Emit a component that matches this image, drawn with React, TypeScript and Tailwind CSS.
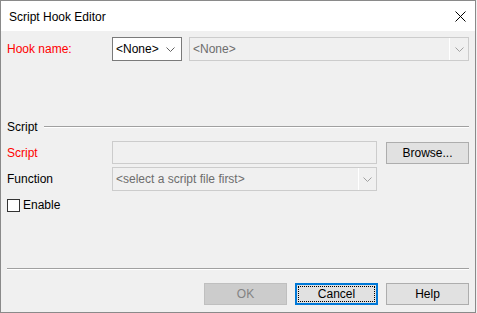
import React from "react";

const font = { fontFamily: '"Liberation Sans", Arial, sans-serif' };

function Chevron({ color = "#606060" }: { color?: string }) {
  return (
    <svg width="9" height="5" viewBox="0 0 9 5" className="shrink-0">
      <polyline points="0.5,0.5 4.5,4.5 8.5,0.5" fill="none" stroke={color} strokeWidth="1" />
    </svg>
  );
}

function Button({ label, kind }: { label: string; kind?: "disabled" | "focus" }) {
  if (kind === "disabled") {
    return (
      <div className="flex h-[22px] w-[83px] items-center justify-center border border-[#bfbfbf] bg-[#cccccc] text-[#838383]">
        {label}
      </div>
    );
  }
  if (kind === "focus") {
    return (
      <div className="flex h-[22px] w-[83px] border-2 border-[#0078d7] bg-[#e1e1e1] p-px">
        <div className="flex flex-1 items-center justify-center border border-dotted border-black">
          {label}
        </div>
      </div>
    );
  }
  return (
    <div className="flex h-[22px] w-[83px] items-center justify-center border border-[#adadad] bg-[#e1e1e1]">
      {label}
    </div>
  );
}

export default function App() {
  return (
    <div className="h-[313px] w-[477px] bg-[#f0f0f0]" style={font}>
      <div className="flex h-[313px] w-[476px] flex-col border border-[#8a8a8a] text-[12px] leading-[16px] text-black">
        <div className="flex h-[30px] items-center justify-between bg-white pl-[8px] pr-[9px]">
          <span className="pt-px">Script Hook Editor</span>
          <svg width="11" height="11" viewBox="0 0 11 11">
            <path d="M0.5 0.5 L10.5 10.5 M10.5 0.5 L0.5 10.5" stroke="#000" strokeWidth="1" />
          </svg>
        </div>

        <div className="flex flex-1 flex-col px-[6px]">
          <div className="mt-[6px] flex h-[24px] items-center">
            <span className="w-[105px] text-[#ff0000]">Hook name:</span>
            <div className="flex h-[24px] w-[70px] items-center justify-between border border-[#7a7a7a] bg-white pl-[3px] pr-[6px]">
              <span>&lt;None&gt;</span>
              <Chevron />
            </div>
            <div className="ml-[7px] flex h-[24px] flex-1 border border-[#cccccc] bg-[#f0f0f0]">
              <div className="flex flex-1 items-center border-r border-white pl-[3px] text-[#6d6d6d]">
                &lt;None&gt;
              </div>
              <div className="flex w-[18px] items-center justify-center">
                <Chevron color="#a0a0a0" />
              </div>
            </div>
          </div>

          <div className="mt-[58px] flex h-[16px] items-center">
            <span>Script</span>
            <div className="ml-[6px] h-[2px] flex-1 border-t border-b border-t-[#a0a0a0] border-b-white" />
          </div>

          <div className="mt-[6px] flex h-[23px] items-center">
            <span className="w-[105px] text-[#ff0000]">Script</span>
            <div className="h-[23px] w-[265px] border border-[#cccccc] bg-[#f0f0f0]" />
            <div className="ml-[9px]">
              <Button label="Browse..." />
            </div>
          </div>

          <div className="mt-[3px] flex h-[24px] items-center">
            <span className="w-[105px]">Function</span>
            <div className="flex h-[24px] w-[265px] border border-[#cccccc] bg-[#f0f0f0]">
              <div className="flex flex-1 items-center border-r border-white pl-[3px] text-[#6d6d6d]">
                &lt;select a script file first&gt;
              </div>
              <div className="flex w-[17px] items-center justify-center">
                <Chevron color="#a0a0a0" />
              </div>
            </div>
          </div>

          <div className="mt-[6px] flex items-center">
            <div className="h-[13px] w-[13px] border border-[#333333] bg-white" />
            <span className="ml-[3px]">Enable</span>
          </div>

          <div className="mt-[55px] h-[2px] border-t border-b border-t-[#a0a0a0] border-b-white" />

          <div className="mt-[13px] flex justify-end gap-[8px]">
            <Button label="OK" kind="disabled" />
            <Button label="Cancel" kind="focus" />
            <Button label="Help" />
          </div>
        </div>
      </div>
    </div>
  );
}
